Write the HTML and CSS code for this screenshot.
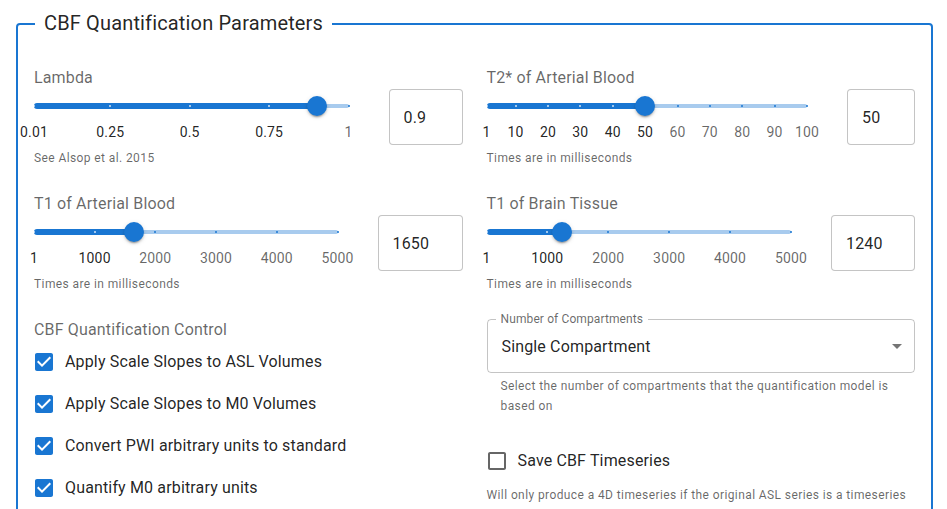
FILE: index.html
```html
<!DOCTYPE html>
<html lang="en">
<head>
<meta charset="utf-8">
<title>CBF Quantification Parameters</title>
<link rel="stylesheet" href="styles.css">
</head>
<body>
<fieldset class="panel">
  <legend class="panel-title">CBF Quantification Parameters</legend>
  <div class="grid">

    <div class="param">
      <div class="param-label">Lambda</div>
      <div class="param-row">
        <div class="slider" role="slider" aria-label="Lambda" aria-valuemin="0.01" aria-valuemax="1" aria-valuenow="0.9">
          <span class="rail"></span>
          <span class="track" style="width:89.9%"></span>
          <span class="mark mark-on" style="left:0%"></span>
          <span class="mark mark-on" style="left:24.24%"></span>
          <span class="mark mark-on" style="left:49.49%"></span>
          <span class="mark mark-on" style="left:74.75%"></span>
          <span class="mark" style="left:100%"></span>
          <span class="mark-label mark-label-on" style="left:0%">0.01</span>
          <span class="mark-label mark-label-on" style="left:24.24%">0.25</span>
          <span class="mark-label mark-label-on" style="left:49.49%">0.5</span>
          <span class="mark-label mark-label-on" style="left:74.75%">0.75</span>
          <span class="mark-label" style="left:100%">1</span>
          <span class="thumb" style="left:89.9%"></span>
        </div>
        <input class="num num-lambda" type="text" value="0.9" aria-label="Lambda value">
      </div>
      <div class="helper">See Alsop et al. 2015</div>
    </div>

    <div class="param">
      <div class="param-label">T2* of Arterial Blood</div>
      <div class="param-row">
        <div class="slider" role="slider" aria-label="T2* of Arterial Blood" aria-valuemin="1" aria-valuemax="100" aria-valuenow="50">
          <span class="rail"></span>
          <span class="track" style="width:49.49%"></span>
          <span class="mark mark-on" style="left:0%"></span>
          <span class="mark mark-on" style="left:9.09%"></span>
          <span class="mark mark-on" style="left:19.19%"></span>
          <span class="mark mark-on" style="left:29.29%"></span>
          <span class="mark mark-on" style="left:39.39%"></span>
          <span class="mark" style="left:59.6%"></span>
          <span class="mark" style="left:69.7%"></span>
          <span class="mark" style="left:79.8%"></span>
          <span class="mark" style="left:89.9%"></span>
          <span class="mark" style="left:100%"></span>
          <span class="mark-label mark-label-on" style="left:0%">1</span>
          <span class="mark-label mark-label-on" style="left:9.09%">10</span>
          <span class="mark-label mark-label-on" style="left:19.19%">20</span>
          <span class="mark-label mark-label-on" style="left:29.29%">30</span>
          <span class="mark-label mark-label-on" style="left:39.39%">40</span>
          <span class="mark-label mark-label-on" style="left:49.49%">50</span>
          <span class="mark-label" style="left:59.6%">60</span>
          <span class="mark-label" style="left:69.7%">70</span>
          <span class="mark-label" style="left:79.8%">80</span>
          <span class="mark-label" style="left:89.9%">90</span>
          <span class="mark-label" style="left:100%">100</span>
          <span class="thumb" style="left:49.49%"></span>
        </div>
        <input class="num num-t2" type="text" value="50" aria-label="T2* value">
      </div>
      <div class="helper">Times are in milliseconds</div>
    </div>

    <div class="param">
      <div class="param-label">T1 of Arterial Blood</div>
      <div class="param-row">
        <div class="slider" role="slider" aria-label="T1 of Arterial Blood" aria-valuemin="1" aria-valuemax="5000" aria-valuenow="1650">
          <span class="rail"></span>
          <span class="track" style="width:32.99%"></span>
          <span class="mark mark-on" style="left:0%"></span>
          <span class="mark mark-on" style="left:19.98%"></span>
          <span class="mark" style="left:39.99%"></span>
          <span class="mark" style="left:59.99%"></span>
          <span class="mark" style="left:80%"></span>
          <span class="mark" style="left:100%"></span>
          <span class="mark-label mark-label-on" style="left:0%">1</span>
          <span class="mark-label mark-label-on" style="left:19.98%">1000</span>
          <span class="mark-label" style="left:39.99%">2000</span>
          <span class="mark-label" style="left:59.99%">3000</span>
          <span class="mark-label" style="left:80%">4000</span>
          <span class="mark-label" style="left:100%">5000</span>
          <span class="thumb" style="left:32.99%"></span>
        </div>
        <input class="num num-t1a" type="text" value="1650" aria-label="T1 arterial value">
      </div>
      <div class="helper">Times are in milliseconds</div>
    </div>

    <div class="param">
      <div class="param-label">T1 of Brain Tissue</div>
      <div class="param-row">
        <div class="slider" role="slider" aria-label="T1 of Brain Tissue" aria-valuemin="1" aria-valuemax="5000" aria-valuenow="1240">
          <span class="rail"></span>
          <span class="track" style="width:24.78%"></span>
          <span class="mark mark-on" style="left:0%"></span>
          <span class="mark mark-on" style="left:19.98%"></span>
          <span class="mark" style="left:39.99%"></span>
          <span class="mark" style="left:59.99%"></span>
          <span class="mark" style="left:80%"></span>
          <span class="mark" style="left:100%"></span>
          <span class="mark-label mark-label-on" style="left:0%">1</span>
          <span class="mark-label mark-label-on" style="left:19.98%">1000</span>
          <span class="mark-label" style="left:39.99%">2000</span>
          <span class="mark-label" style="left:59.99%">3000</span>
          <span class="mark-label" style="left:80%">4000</span>
          <span class="mark-label" style="left:100%">5000</span>
          <span class="thumb" style="left:24.78%"></span>
        </div>
        <input class="num num-t1b" type="text" value="1240" aria-label="T1 brain value">
      </div>
      <div class="helper">Times are in milliseconds</div>
    </div>

    <div class="param">
      <div class="param-label">CBF Quantification Control</div>
      <div class="checks">
        <label class="check-row">
          <span class="check-box"><svg viewBox="0 0 24 24" class="icon-checked"><path d="M19 3H5c-1.11 0-2 .9-2 2v14c0 1.1.89 2 2 2h14c1.11 0 2-.9 2-2V5c0-1.1-.89-2-2-2zm-9 14l-5-5 1.41-1.41L10 14.17l7.59-7.59L19 8l-9 9z"/></svg></span>
          <span class="check-text">Apply Scale Slopes to ASL Volumes</span>
        </label>
        <label class="check-row">
          <span class="check-box"><svg viewBox="0 0 24 24" class="icon-checked"><path d="M19 3H5c-1.11 0-2 .9-2 2v14c0 1.1.89 2 2 2h14c1.11 0 2-.9 2-2V5c0-1.1-.89-2-2-2zm-9 14l-5-5 1.41-1.41L10 14.17l7.59-7.59L19 8l-9 9z"/></svg></span>
          <span class="check-text">Apply Scale Slopes to M0 Volumes</span>
        </label>
        <label class="check-row">
          <span class="check-box"><svg viewBox="0 0 24 24" class="icon-checked"><path d="M19 3H5c-1.11 0-2 .9-2 2v14c0 1.1.89 2 2 2h14c1.11 0 2-.9 2-2V5c0-1.1-.89-2-2-2zm-9 14l-5-5 1.41-1.41L10 14.17l7.59-7.59L19 8l-9 9z"/></svg></span>
          <span class="check-text">Convert PWI arbitrary units to standard</span>
        </label>
        <label class="check-row">
          <span class="check-box"><svg viewBox="0 0 24 24" class="icon-checked"><path d="M19 3H5c-1.11 0-2 .9-2 2v14c0 1.1.89 2 2 2h14c1.11 0 2-.9 2-2V5c0-1.1-.89-2-2-2zm-9 14l-5-5 1.41-1.41L10 14.17l7.59-7.59L19 8l-9 9z"/></svg></span>
          <span class="check-text">Quantify M0 arbitrary units</span>
        </label>
      </div>
    </div>

    <div class="param">
      <div class="select">
        <span class="select-label">Number of Compartments</span>
        <span class="select-value">Single Compartment</span>
        <svg class="select-arrow" viewBox="0 0 24 24"><path d="M7 10l5 5 5-5z"/></svg>
      </div>
      <div class="helper helper-indent">Select the number of compartments that the quantification model is based on</div>
      <label class="check-row check-row-save">
        <span class="check-box"><svg viewBox="0 0 24 24" class="icon-unchecked"><path d="M19 5v14H5V5h14m0-2H5c-1.1 0-2 .9-2 2v14c0 1.1.9 2 2 2h14c1.1 0 2-.9 2-2V5c0-1.1-.9-2-2-2z"/></svg></span>
        <span class="check-text">Save CBF Timeseries</span>
      </label>
      <div class="helper">Will only produce a 4D timeseries if the original ASL series is a timeseries</div>
    </div>

  </div>
</fieldset>
</body>
</html>
```

FILE: styles.css
```css
html {
  overflow: hidden;
}

body {
  margin: 0;
  padding: 11px 14px 0 16px;
  font-family: Roboto, "Noto Sans", "Liberation Sans", sans-serif;
  color: rgba(0, 0, 0, 0.87);
  background: #fff;
}

.panel {
  margin: 0;
  min-width: 0;
  border: 2px solid #1976d2;
  border-radius: 4px;
  padding: 28px 16px 16px;
}

.panel-title {
  margin-left: 1px;
  padding: 0 9px 2px;
  font-size: 20px;
  line-height: 24px;
  font-weight: 400;
  letter-spacing: 0.0075em;
  color: rgba(0, 0, 0, 0.87);
}

.grid {
  display: grid;
  grid-template-columns: 1fr 1fr;
  column-gap: 24px;
  row-gap: 23px;
}

.param {
  min-width: 0;
}

.param-label {
  padding-top: 1px;
  font-size: 16px;
  line-height: 23px;
  letter-spacing: 0.00938em;
  color: rgba(0, 0, 0, 0.6);
}

.param-row {
  display: flex;
  align-items: flex-start;
  gap: 40px;
}

.slider {
  position: relative;
  flex: 1;
  height: 56px;
  color: #1976d2;
}

.rail {
  position: absolute;
  left: 0;
  right: 0;
  top: 15px;
  height: 4px;
  border-radius: 12px;
  background: #1976d2;
  opacity: 0.38;
}

.track {
  position: absolute;
  left: 0;
  top: 14px;
  height: 6px;
  border-radius: 12px 0 0 12px;
  background: #1976d2;
}

.mark {
  position: absolute;
  top: 16px;
  width: 2px;
  height: 2px;
  border-radius: 1px;
  background: #1976d2;
  transform: translateX(-50%);
}

.mark-on {
  background: rgba(255, 255, 255, 0.8);
}

.mark-label {
  position: absolute;
  top: 33px;
  font-size: 14px;
  line-height: 20px;
  letter-spacing: 0.01071em;
  white-space: nowrap;
  color: rgba(0, 0, 0, 0.6);
  transform: translateX(-50%);
}

.mark-label-on {
  color: rgba(0, 0, 0, 0.87);
}

.thumb {
  position: absolute;
  top: 7px;
  width: 20px;
  height: 20px;
  margin-left: -10px;
  border-radius: 50%;
  background: #1976d2;
  box-shadow: 0 3px 1px -2px rgba(0, 0, 0, 0.2), 0 2px 2px 0 rgba(0, 0, 0, 0.14), 0 1px 5px 0 rgba(0, 0, 0, 0.12);
}

.num {
  box-sizing: border-box;
  flex: none;
  height: 56px;
  margin: 0;
  padding: 16.5px 14px;
  border: 1px solid rgba(0, 0, 0, 0.23);
  border-radius: 4px;
  font-family: Roboto, "Noto Sans", "Liberation Sans", sans-serif;
  font-size: 16px;
  line-height: 23px;
  letter-spacing: 0.00938em;
  color: rgba(0, 0, 0, 0.87);
  background: #fff;
  outline: none;
}

.num-lambda { width: 74px; }
.num-t2 { width: 68px; }
.num-t1a { width: 85px; }
.num-t1b { width: 84px; }

.helper {
  margin-top: 3px;
  font-size: 12px;
  line-height: 20px;
  letter-spacing: 0.03333em;
  color: rgba(0, 0, 0, 0.6);
}

.helper-indent {
  margin: 3px 14px 0;
}

.checks {
  display: flex;
  flex-direction: column;
}

.check-row {
  display: flex;
  align-items: center;
  height: 42px;
  margin-left: -11px;
  cursor: pointer;
}

.check-box {
  box-sizing: border-box;
  width: 42px;
  height: 42px;
  padding: 9px;
  flex: none;
}

.check-box svg {
  display: block;
  width: 24px;
  height: 24px;
}

.icon-checked {
  fill: #1976d2;
}

.icon-unchecked {
  fill: rgba(0, 0, 0, 0.6);
}

.check-text {
  font-size: 16px;
  line-height: 24px;
  letter-spacing: 0.00938em;
  color: rgba(0, 0, 0, 0.87);
}

.select {
  position: relative;
  box-sizing: border-box;
  display: flex;
  align-items: center;
  height: 54px;
  margin-top: 2px;
  padding: 0 14px;
  border: 1px solid rgba(0, 0, 0, 0.23);
  border-radius: 4px;
}

.select-label {
  position: absolute;
  top: -8px;
  left: 8px;
  padding: 0 5px;
  background: #fff;
  font-size: 12px;
  line-height: 14px;
  letter-spacing: 0.00938em;
  color: rgba(0, 0, 0, 0.6);
}

.select-value {
  font-size: 16px;
  line-height: 23px;
  letter-spacing: 0.00938em;
  color: rgba(0, 0, 0, 0.87);
}

.select-arrow {
  position: absolute;
  right: 5px;
  top: calc(50% - 12px);
  width: 24px;
  height: 24px;
  fill: rgba(0, 0, 0, 0.54);
}

.check-row-save {
  margin-top: 24px;
}
```
